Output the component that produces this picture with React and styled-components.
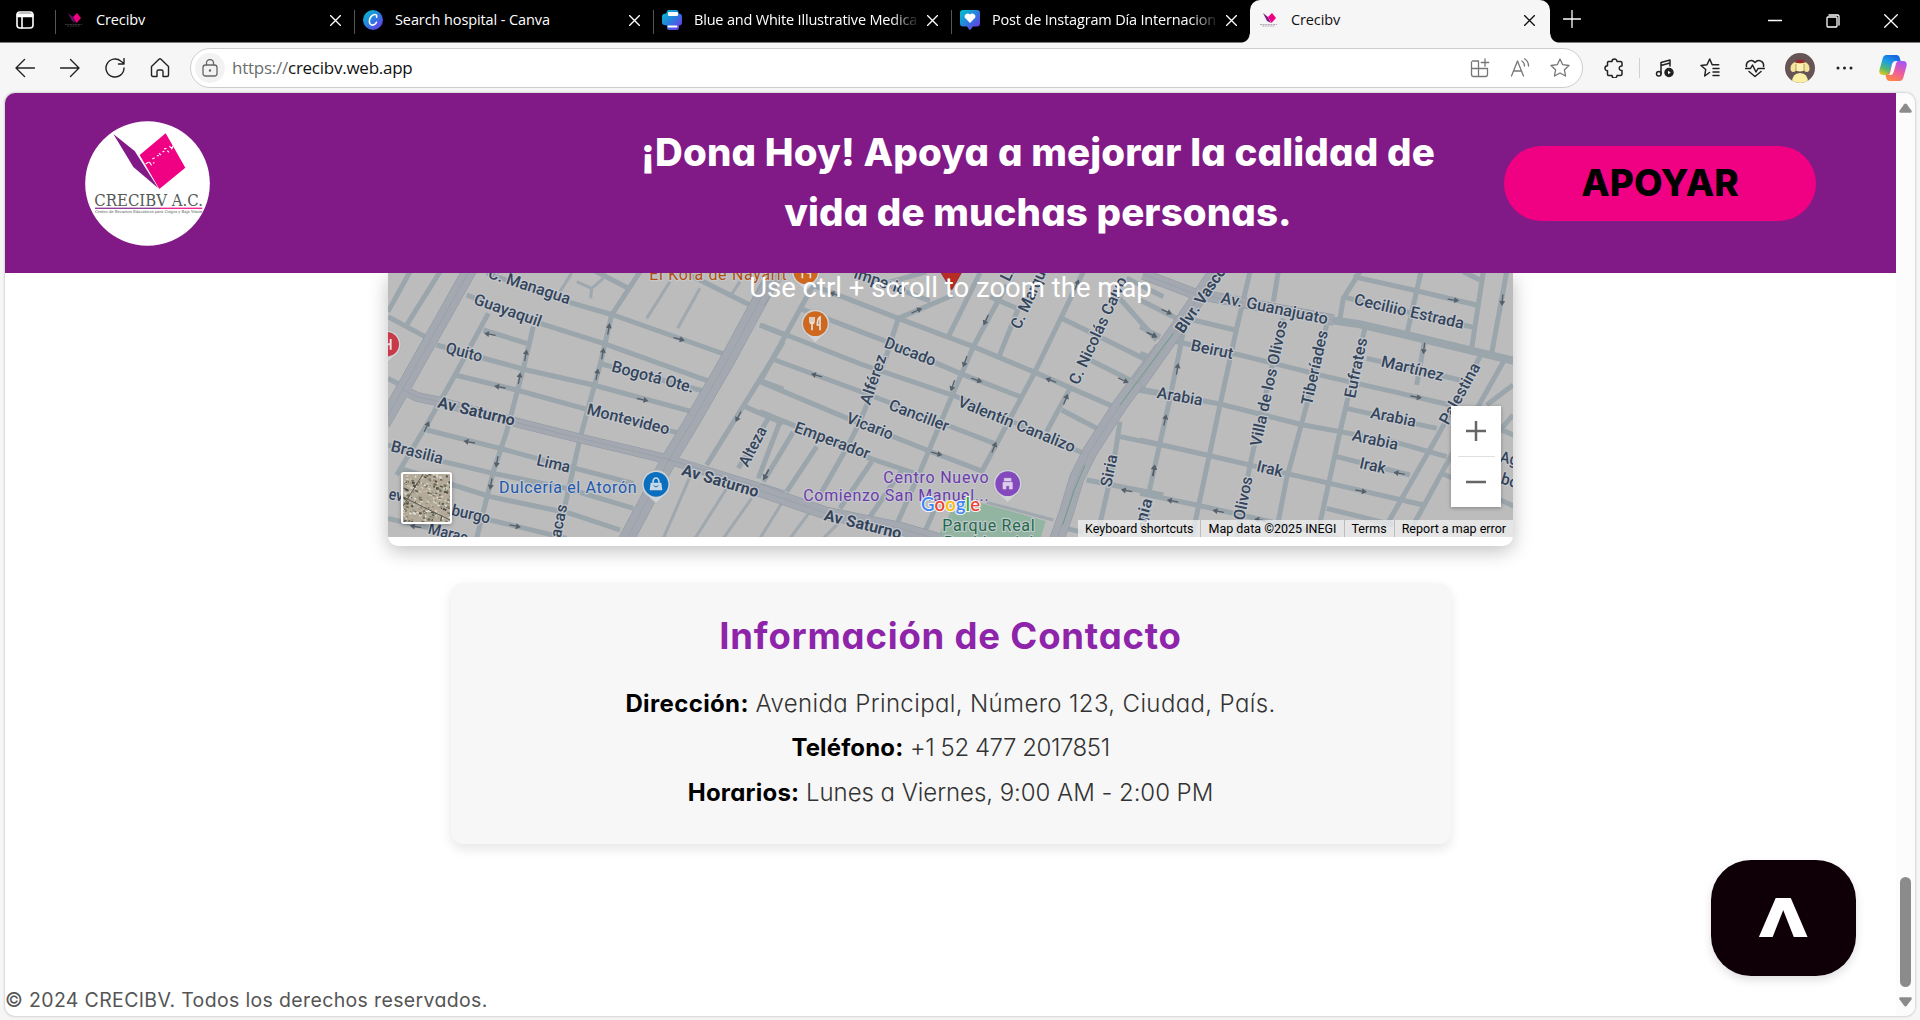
import React from "react";
import styled, { createGlobalStyle, css } from "styled-components";

const Global = createGlobalStyle`
  * { box-sizing: border-box; }
  html, body { margin: 0; padding: 0; }
  body { width: 1920px; height: 1020px; overflow: hidden; background: #f6f6f6; font-family: Inter, "Liberation Sans", sans-serif; }
  svg { display: block; flex: none; }
`;

const brandFont = css`
  font-family: Inter, "Liberation Sans", sans-serif;
  font-feature-settings: "cv11";
`;

const Window = styled.div`
  width: 1920px;
  height: 1020px;
  display: flex;
  flex-direction: column;
  background: #f6f6f6;
  overflow: hidden;
`;

const Spaced = styled.span`
  letter-spacing: ${(p) => p.$ls || 0}px;
`;

/* ---------- tab strip ---------- */

const TabStrip = styled.div`
  height: 43px;
  display: flex;
  background: #000;
  border-bottom: 1px solid #7c7c7c;
  flex: none;
`;

const Workspaces = styled.div`
  width: 55px;
  padding: 11px 0 0 16px;
`;

const Tab = styled.div`
  width: ${(p) => p.$w}px;
  height: 42px;
  display: flex;
  align-items: center;
  padding: 0 13px 2px 9px;
  color: #fff;
  position: relative;
  &::before {
    content: "";
    position: absolute;
    left: 0;
    top: 10px;
    width: 1px;
    height: 24px;
    background: #555;
  }
`;

const ActiveTab = styled(Tab)`
  height: 43px;
  padding: 0 15px 3px 9px;
  background: #f6f6f6;
  color: #111;
  border-radius: 10px 10px 0 0;
  &::before {
    left: -9px;
    top: 34px;
    width: 9px;
    height: 9px;
    background: radial-gradient(circle at 0 0, #000 8px, #f6f6f6 9px);
  }
  &::after {
    content: "";
    position: absolute;
    right: -9px;
    top: 34px;
    width: 9px;
    height: 9px;
    background: radial-gradient(circle at 100% 0, #000 8px, #f6f6f6 9px);
  }
`;

const Favicon = styled.div`
  width: 20px;
  height: 20px;
  margin-right: 12px;
  flex: none;
`;

const TabTitle = styled.div`
  flex: 1;
  min-width: 0;
  overflow: hidden;
  white-space: nowrap;
  font: 400 14.5px/20px "Open Sans", "Noto Sans", sans-serif;
  letter-spacing: ${(p) => p.$ls || 0}px;
  ${(p) => p.$fade && css`mask-image: linear-gradient(90deg, #000 88%, transparent 101%);`}
  margin-right: 9px;
`;

const WindowButtons = styled.div`
  margin-left: auto;
  display: flex;
  align-items: center;
  gap: 44px;
  padding-right: 22px;
`;

const NewTab = styled.div`
  padding: 10px 0 0 13px;
`;

/* ---------- toolbar ---------- */

const Toolbar = styled.div`
  height: 50px;
  display: flex;
  align-items: center;
  padding: 0 13px 0 15px;
  flex: none;
`;

const NavButtons = styled.div`
  display: flex;
  align-items: center;
  width: 175px;
  gap: 25px;
`;

const AddressBar = styled.div`
  width: 1393px;
  height: 40px;
  display: flex;
  align-items: center;
  border: 1px solid #cdcdcd;
  border-radius: 20px;
  background: #fff;
  padding: 0 12px 0 4px;
`;

const SiteInfo = styled.div`
  width: 30px;
  height: 30px;
  border-radius: 50%;
  background: #f2f2f2;
  display: grid;
  place-items: center;
  margin-right: 7px;
`;

const Url = styled.div`
  flex: 1;
  color: #111;
  font: 400 17px/24px "Open Sans", "Noto Sans", sans-serif;
  letter-spacing: -0.25px;
  span { color: #6d6d6d; }
`;

const BarIcons = styled.div`
  display: flex;
  gap: 20px;
`;

const Actions = styled.div`
  margin-left: auto;
  display: flex;
  align-items: center;
`;

const Divider = styled.div`
  width: 1px;
  height: 20px;
  background: #d0d0d0;
  margin: 0 15px;
`;

const Shortcuts = styled.div`
  display: flex;
  gap: 25px;
  margin-right: 20px;
`;

const Account = styled.div`
  display: flex;
  align-items: center;
  gap: 20px;
  margin-right: 24px;
`;

/* ---------- page ---------- */

const Viewport = styled.div`
  width: 1910px;
  height: 923px;
  margin-left: 5px;
  display: flex;
  background: #fff;
  border-radius: 10px;
  overflow: hidden;
  box-shadow: 0 0 2px 1px rgba(0, 0, 0, 0.14);
`;

const Page = styled.div`
  width: 1891px;
  display: flex;
  flex-direction: column;
  position: relative;
`;

const Banner = styled.header`
  height: 180px;
  background: #811a87;
  display: flex;
  align-items: center;
  padding: 1px 80px 0;
  position: relative;
  z-index: 1;
  flex: none;
`;

const Slogan = styled.h1`
  ${brandFont}
  width: 800px;
  margin: 0 66px 3px auto;
  text-align: center;
  color: #fff;
  font-size: 38.5px;
  line-height: 60px;
  font-weight: 800;
  white-space: nowrap;
`;

const SupportButton = styled.button`
  ${brandFont}
  width: 312px;
  height: 75px;
  border: 0;
  border-radius: 38px;
  background: #f00082;
  color: #000;
  font-size: 37px;
  font-weight: 800;
  padding: 0 0 2px;
`;

const MapCard = styled.section`
  width: 1125px;
  height: 273px;
  margin: 0 auto;
  background: #fff;
  border-radius: 0 0 10px 10px;
  box-shadow: 0 5px 19px rgba(0, 0, 0, 0.25);
  overflow: hidden;
  position: relative;
  flex: none;
`;

const MapHint = styled.div`
  position: absolute;
  top: -2px;
  left: 0;
  right: 0;
  text-align: center;
  color: #fff;
  font: 400 27.5px/34px Roboto, sans-serif;
`;

const ZoomControl = styled.div`
  position: absolute;
  left: 1063px;
  top: 133px;
  width: 50px;
  height: 101px;
  background: #fff;
  box-shadow: 0 1px 4px rgba(0, 0, 0, 0.3);
  display: flex;
  flex-direction: column;
  align-items: center;
  justify-content: space-between;
  padding: 15px 6px;
  hr { width: 37px; height: 1px; border: 0; margin: 0; background: #e0e0e0; }
`;

const Thumb = styled.div`
  position: absolute;
  left: 13px;
  top: 199px;
  width: 51px;
  height: 52px;
  border: 2px solid #fff;
  border-radius: 3px;
  overflow: hidden;
  box-shadow: 0 1px 4px rgba(0, 0, 0, 0.3);
`;

const Attribution = styled.div`
  position: absolute;
  right: 0;
  top: 247px;
  height: 17px;
  display: flex;
  gap: 1px;
  color: #000;
  font: 400 12.5px/17px Roboto, sans-serif;
  span { background: rgba(245, 245, 245, 0.72); padding: 0 7px; white-space: nowrap; }
`;

const ContactCard = styled.section`
  ${brandFont}
  width: 1000px;
  height: 261px;
  margin: 37px auto 0;
  padding-top: 30px;
  background: #f7f7f7;
  border-radius: 12px;
  box-shadow: 0 5px 12px rgba(0, 0, 0, 0.1);
  text-align: center;
  flex: none;
`;

const ContactTitle = styled.h2`
  margin: 0 0 23px;
  color: #8e24aa;
  font-size: 36.5px;
  line-height: 46px;
  font-weight: 700;
  letter-spacing: 0.8px;
`;

const ContactLine = styled.p`
  margin: 0;
  height: 44.4px;
  line-height: 44.4px;
  color: #333;
  font-size: 24px;
  font-weight: 300;
  white-space: pre;
`;

const FieldName = styled.strong`
  color: #000;
  font-weight: 700;
  letter-spacing: ${(p) => p.$ls || 0}px;
`;

const Footer = styled.footer`
  ${brandFont}
  margin: auto 0 0 0;
  color: #555;
  font-size: 19.5px;
  line-height: 30px;
  height: 31px;
  letter-spacing: 0.35px;
`;

const TopButton = styled.button`
  position: absolute;
  left: 1706px;
  top: 767px;
  width: 145px;
  height: 116px;
  border: 0;
  padding: 0 0 11px;
  border-radius: 40px;
  background: #0f0007;
  color: #fff;
  font: 700 71px/80px "DejaVu Sans", sans-serif;
  box-shadow: 0 4px 10px rgba(0, 0, 0, 0.13);
  span { display: inline-block; transform: scaleX(1.1); }
`;

const Scrollbar = styled.div`
  width: 19px;
  background: #fcfcfc;
  display: flex;
  flex-direction: column;
  align-items: center;
  padding: 10px 0 9px;
`;

const ScrollThumb = styled.div`
  width: 11px;
  height: 110px;
  margin: auto 0 10px;
  border-radius: 6px;
  background: #8b8b8b;
`;

/* ---------- icons ---------- */

const Line = ({ w = 20, h = 20, sw = 1.3, c = "currentColor", children }) => (
  <svg width={w} height={h} viewBox={`0 0 ${w} ${h}`} fill="none" stroke={c} strokeWidth={sw} strokeLinecap="round" strokeLinejoin="round">
    {children}
  </svg>
);

const Cross = ({ s = 11 }) => (
  <Line w={s} h={s} sw={1.4}><path d={`M.5 .5L${s - 0.5} ${s - 0.5}M${s - 0.5} .5L.5 ${s - 0.5}`} /></Line>
);

const BookFavicon = ({ dim }) => (
  <svg width="20" height="20" viewBox="0 0 20 20">
    <path d="M4 3l5 4 3 6-4-2z" fill={dim ? "#5d1563" : "#811a87"} />
    <path d="M9 7l4-4 4 5-4.500 5z" fill="#f00082" />
    <path d="M1 14.500h17M3 16h13" stroke={dim ? "#38343a" : "#b9a8bb"} strokeWidth="1" strokeDasharray="2 .6" />
  </svg>
);

const Gradient = ({ id }) => (
  <linearGradient id={id} x1="0" y1="0" x2="1" y2="1">
    <stop offset="0" stopColor="#00c4cc" /><stop offset=".5" stopColor="#2a7de0" /><stop offset="1" stopColor="#7d2ae8" />
  </linearGradient>
);

const CanvaIcon = () => (
  <svg width="20" height="20" viewBox="0 0 20 20">
    <defs><Gradient id="gc" /></defs>
    <circle cx="10" cy="10" r="10" fill="url(#gc)" />
    <path d="M13.600 7.200c.5-1.700-.5-3-2.300-2.700-2.800.4-5.100 4-4.900 7.200.1 2.200 1.400 3.600 3.300 3.400 1.600-.2 2.900-1.300 3.800-2.800" fill="none" stroke="#fff" strokeWidth="1.600" strokeLinecap="round" />
  </svg>
);

const PrintIcon = () => (
  <svg width="20" height="20" viewBox="0 0 20 20">
    <defs><Gradient id="gp" /></defs>
    <path d="M5 1.500Q5 0 6.500 0h8Q16 0 16.500 2l.5 1.500q3 .5 3 3v6q0 3-3 3v2.500q0 2-2 2H7Q5 20 5 18v-2.500q-5 0-5-3v-6q0-3 4-3z" fill="url(#gp)" />
    <rect x="6" y="2" width="10" height="4" rx="1" fill="#fff" /><rect x="5.500" y="15.500" width="10" height="2" rx="1" fill="#fff" />
  </svg>
);

const HeartIcon = () => (
  <svg width="20" height="20" viewBox="0 0 20 20">
    <defs><Gradient id="gh" /></defs>
    <path d="M3 0h14q3 0 3 3v10.500q0 3-3 3h-4l-2.500 3.200q-.6.600-1.200 0L7 16.500H3q-3 0-3-3V3q0-3 3-3z" fill="url(#gh)" />
    <path d="M10 13L4.700 7.600a3.100 3.100 0 0 1 5.300-3 3.100 3.100 0 0 1 5.300 3z" fill="#fff" />
  </svg>
);

const LogoText = styled.text`
  font-family: "DejaVu Serif", serif;
  fill: #555a58;
`;

const Logo = () => (
  <svg width="125" height="125" viewBox="0 0 375 375">
    <defs>
      <clipPath id="disc"><circle cx="187.500" cy="187.500" r="187" /></clipPath>
      <linearGradient id="rule"><stop offset=".6" stopColor="#811a87" /><stop offset=".62" stopColor="#f00082" /></linearGradient>
    </defs>
    <circle cx="187.500" cy="187.500" r="187" fill="#fff" />
    <g clipPath="url(#disc)">
      <path d="M85 39l64 51 71 112-75-64z" fill="#811a87" />
      <path d="M242 37l59 103-78 64-59-102z" fill="#f00082" />
      <path d="M183 128l7 -4M194 124l5 8M203 113l5-2M205 126l2-1M217 104l3 0M223 98l4 3M234 92l3-1M239 83l4 0M248 90l3 3M254 76l7 7M260 84l4-9" stroke="#fff" strokeWidth="3.500" strokeLinecap="round" />
      <LogoText x="28" y="254" fontSize="50" textLength="326" lengthAdjust="spacingAndGlyphs">CRECIBV A.C.</LogoText>
      <rect x="30" y="260" width="322" height="3.500" fill="url(#rule)" />
      <LogoText x="30" y="277" fontSize="12" textLength="322" lengthAdjust="spacingAndGlyphs">Centro de Recursos Educativos para Ciegos y Baja Visión</LogoText>
    </g>
  </svg>
);

const Copilot = () => (
  <svg width="28" height="28" viewBox="0 0 28 28">
    <defs>
      <linearGradient id="cb" x1=".6" y1="0" x2=".1" y2="1"><stop offset="0" stopColor="#1769e0" /><stop offset=".35" stopColor="#1b9de8" /><stop offset=".7" stopColor="#58b96a" /><stop offset="1" stopColor="#f2c71c" /></linearGradient>
      <linearGradient id="cp" x1=".7" y1="0" x2=".2" y2="1"><stop offset="0" stopColor="#a855f7" /><stop offset=".5" stopColor="#ee5d9a" /><stop offset="1" stopColor="#ff8a3c" /></linearGradient>
    </defs>
    <path d="M7.500 1h10q2.500 0 3.300 3l1 3.500h-4q-2.500 0-3.300 3l-2.300 8q-.8 2.500-3.200 2.500H4Q-.8 21 .7 15L3.800 4Q4.700 1 7.500 1z" fill="url(#cb)" />
    <path d="M20.500 27h-10Q8 27 7.200 24l-.7-3q3 0 4-3l2.600-8.500q.8-2.500 3.400-2.500H24q4.800 0 3.300 6l-3.100 11q-.9 3-3.700 3z" fill="url(#cp)" />
    <path d="M13.200 9.500q.8-2.500 3.400-2.500h1.900q-1 .8-1.600 3l-2.400 8.500q-.8 2.500-3.200 2.500H9.500q1.200-.8 1.700-2.500z" fill="#fff" />
  </svg>
);

const Avatar = () => (
  <svg width="30" height="30" viewBox="0 0 30 30">
    <defs><clipPath id="av"><circle cx="15" cy="15" r="15" /></clipPath></defs>
    <g clipPath="url(#av)">
      <rect width="30" height="30" fill="#665456" />
      <path d="M5.500 15q.5-5 5-6h9q4.500 1 5 6 .3 4-3 4-2 0-2.500-2h-8q-.5 2-2.500 2-3.300 0-3-4z" fill="#f5e59a" />
      <path d="M7 30q0-10 8-10t8 10z" fill="#fbefa5" />
      <path d="M10 9.500q.5-3 5-3t5 3q-5 1.500-10 0z" fill="#962a2c" />
      <path d="M11 11h8v6.500q-4 2-8 0z" fill="#fdf1b2" />
      <path d="M11 11v6M19 11v6" stroke="#8d7a5c" strokeWidth=".7" />
    </g>
  </svg>
);

/* ---------- map ---------- */

/* Each tile uses its own 3x coordinate space. */
const tiles = [
  {
    x: -8,
    major: [
      ["M272 10L70 370 10 475", 40], ["M1175 40L1040 290 930 480 868 582 738 825", 44],
      ["M70 375L110 395 170 408 420 475 600 520 860 582 1210 690", 26],
    ],
    minor: [
      "M320 24L560 110 700 150 1040 270", "M260 90L490 178 670 235 990 350", "M170 240L330 285 440 315 640 360 935 440",
      "M665 297L970 378", "M225 330L410 375 610 430 900 505", "M310 195L440 235", "M140 495L360 550 470 580 760 655",
      "M24 540L190 590 340 625 560 670 760 730", "M60 610L220 660 330 695 570 745 720 795", "M24 760L150 790", "M220 740L330 765 560 820",
      "M460 185L430 310 380 500 340 620 290 820", "M325 145L225 330 140 480 50 630", "M780 20L695 150 660 300 600 520 560 700 530 820",
      "M90 20L24 140", "M24 155L135 215", "M180 20L80 180", "M24 340L65 362", "M640 15L745 70", "M900 15L1120 125",
      "M1140 180L1210 208", "M1135 345L1210 372", "M1210 230L980 600", "M1095 425L1210 475", "M1165 460L1075 610",
    ],
    thin: ["M590 50L635 70 670 40", "M635 70L632 100", "M575 24L540 80", "M870 50L800 160", "M960 70L893 190", "M1080 50L1050 95", "M945 600L850 820", "M1050 655L945 820", "M1115 700L1030 820"],
    arrows: [[330, 208, 190], [897, 222, 15], [686, 192, -80], [668, 266, -80], [651, 328, -80], [437, 271, -80], [418, 340, -80], [360, 366, 190], [788, 404, 12], [140, 485, -65], [268, 531, 190], [351, 590, 100], [333, 657, 100], [1075, 455, 118], [1158, 630, 118], [405, 783, 12], [107, 785, 190]],
    labels: [["C. Managua", 322, 38, 565, 118], ["Guayaquil", 278, 116, 478, 186], ["Quito", 194, 263, 303, 291], ["Bogotá Ote.", 692, 319, 938, 384], ["Montevideo", 618, 447, 864, 509], ["Av Saturno", 170, 427, 401, 483, 1], ["Brasilia", 30, 558, 185, 597], ["Lima", 467, 600, 567, 623], ["Alteza", 1103, 608, 1162, 495], ["Av Saturno", 902, 629, 1131, 697, 1], ["burgo", 212, 750, 327, 776], ["Marac", 142, 805, 259, 835], ["ev", 24, 702, 66, 710], ["acas", 542, 820, 562, 722]],
  },
  {
    x: 372,
    major: [["M-5 110L55 20", 40], ["M-5 675L200 745 420 790 540 825", 36], ["M1205 250L1080 420 990 560 950 640 920 740 888 830", 42]],
    minor: [
      "M0 180L80 210 310 300 590 395 780 480 970 565", "M45 285L330 390 560 480 715 540", "M0 350L250 455 500 555 670 620",
      "M0 440L110 485 330 580 480 630", "M120 130L380 230 600 325 780 395", "M130 50L415 160 640 245 820 320 1060 425",
      "M280 20L510 108", "M415 160L580 90", "M365 58L500 20", "M160 60L0 350", "M415 160L380 270 300 470 265 540 180 690",
      "M660 24L565 215", "M740 60L640 245 560 430 480 620 405 790", "M775 130L715 280", "M970 20L820 330 740 480 665 620",
      "M905 160L1160 285", "M1070 90L1190 225", "M1100 40L1210 95", "M930 370L860 500", "M905 435L1010 490", "M990 285L1110 345",
      "M60 470L-5 640", "M100 500L10 650", "M170 545L80 680", "M335 590L240 730", "M430 610L330 755", "M530 720L490 810",
      "M1080 470L1060 600 1010 820", "M1080 515L1210 542", "M980 645L1210 690", "M1130 375L1210 388", "M895 785L970 802", "M690 95L770 130",
    ],
    thin: ["M65 715L0 820", "M150 740L90 820", "M240 770L190 820", "M680 712L880 765"],
    arrows: [[225, 88, 200], [470, 137, -25], [678, 165, 115], [615, 290, 110], [578, 362, 110], [650, 345, 20], [170, 331, 195], [530, 566, 15], [702, 547, -68], [873, 346, 200], [917, 403, -68], [1090, 346, 25], [1176, 209, 25], [18, 628, 118], [1100, 677, 190], [1182, 617, -82], [950, 60, -68]],
    labels: [["Imperio", 278, 38, 432, 90], ["Ducado", 370, 246, 520, 304], ["Alférez", 330, 422, 380, 275], ["Canciller", 383, 433, 560, 500], ["Vicario", 256, 472, 392, 525], ["Emperador", 100, 500, 323, 583], ["Valentín Canalizo", 590, 422, 938, 563], ["C. Marqu", 780, 195, 858, 25], ["C. Nicolás Calvo", 955, 362, 1102, 45], ["Li", 748, 52, 765, 18], ["Siria", 1053, 668, 1073, 572], ["Av Saturno", 190, 765, 420, 822, 1], ["ania", 1163, 795, 1178, 706]],
  },
  {
    x: 752,
    major: [["M235 10L140 150 -5 355", 42], ["M10 28L160 85 240 100 580 165", 30]],
    minor: [
      "M330 20L290 190 240 420 155 820", "M415 20L400 110M430 160L390 330 330 600 290 820", "M560 180L500 420 440 640 405 820",
      "M675 190L640 330 600 500 530 820", "M130 200L90 400 25 690", "M100 228L300 270 560 335 760 380 930 420", "M160 165L285 195",
      "M0 372L240 417 490 480 600 500 760 530 920 575", "M0 525L200 570 350 605 570 655 850 720", "M0 685L170 720 370 765 600 820",
      "M620 430L890 490", "M590 575L810 630", "M560 730L760 780", "M680 280L960 345", "M640 35L820 75 1010 120", "M660 20L610 100 600 160",
      "M615 97L1000 187", "M843 20L800 210", "M855 220L830 360", "M1030 20L995 250", "M1100 20L1055 265", "M1020 275L900 500 740 780",
      "M1090 290L1000 450 820 780", "M1119 360L1040 420", "M1119 450L1060 520", "M905 625L1125 725", "M1050 480L1125 512", "M0 105L120 165", "M0 185L60 215", "M970 20L1020 45", "M0 265L25 275",
    ],
    extra: "M570 165L660 178 800 210 1125 288",
    thin: [],
    arrows: [[80, 140, 25], [35, 209, 25], [940, 105, 8], [1087, 105, 95], [852, 250, 97], [828, 396, 10], [112, 312, -80], [75, 465, -78], [41, 616, -78], [98, 708, 190], [235, 739, 190], [360, 765, 190], [663, 678, 10], [778, 625, 190]],
    labels: [["Blvr. Vasco", 130, 208, 260, 18, 1], ["Av. Guanajuato", 240, 113, 560, 178], ["Ceciliio Estrada", 640, 118, 968, 192], ["Beirut", 150, 256, 276, 282], ["Arabia", 49, 398, 185, 422], ["Villa de los Olivos", 362, 547, 442, 170], ["Tiberíades", 515, 423, 564, 200], ["Eufrates", 645, 402, 682, 222], ["Martínez", 721, 304, 907, 348], ["Palestina", 924, 482, 1022, 305], ["Arabia", 689, 458, 825, 486], ["Arabia", 634, 526, 771, 555], ["Irak", 347, 618, 425, 636], ["Irak", 656, 609, 734, 626], ["Olivos", 312, 768, 338, 638], ["nia", 18, 775, 38, 705], ["Ag", 1078, 590, 1130, 602], ["bo", 1080, 655, 1130, 670]],
  },
];

const MapLabel = styled.text`
  font-family: Roboto, sans-serif;
  font-size: 48px;
  font-weight: ${(p) => (p.$bold ? 700 : p.$c ? 400 : 500)};
  fill: ${(p) => p.$c || "#34445a"};
  stroke: #c4c8cd;
  stroke-width: 7px;
  stroke-linejoin: round;
  paint-order: stroke;
`;

const StreetLabel = ({ d: [text, x1, y1, x2, y2, bold] }) => {
  const angle = (Math.atan2(y2 - y1, x2 - x1) * 180) / Math.PI;
  return (
    <MapLabel $bold={bold} transform={`translate(${x1} ${y1}) rotate(${angle})`} textLength={Math.hypot(x2 - x1, y2 - y1)} lengthAdjust="spacingAndGlyphs">
      {text}
    </MapLabel>
  );
};

const Pin = ({ x, y, c, children }) => (
  <g transform={`translate(${x} ${y})`}>
    <path d="M0 57L-22 37A43 43 0 1 1 22 37z" fill="#d0d3d6" stroke="#a9adb1" strokeWidth="2" />
    <circle r="37" fill={c} />
    {children}
  </g>
);

const Fork = () => (
  <path d="M-16-20v14q0 5 6 6v20M-4-20v14q0 5-6 6M-10-20v18M14 20V-20q-8 4-8 24h8" fill="none" stroke="#e5e0da" strokeWidth="5" />
);

const GoogleMark = styled.text`
  font: 600 18.5px Lato, sans-serif;
  stroke: #f4f4f4;
  stroke-width: 2.2px;
  paint-order: stroke;
`;

const MapArt = () => (
  <svg width="1125" height="264" viewBox="0 0 1125 264">
    <rect width="1125" height="264" fill="#bcbcbc" />
    <g transform="translate(372 -8) scale(.33333)">
      <path d="M590 708l70 5 197 55-18 62H525z" fill="#92b5a1" />
    </g>
    {tiles.map((t) => (
      <g key={t.x} transform={`translate(${t.x} -8) scale(.33333)`} fill="none" strokeLinejoin="round">
        {t.thin.map((d) => <path key={d} d={d} stroke="#9fa8af" strokeWidth="9" />)}
        {t.minor.map((d) => <path key={d} d={d} stroke="#9ba5ac" strokeWidth="15" />)}
        {t.extra && <path d={t.extra} stroke="#9ba5ac" strokeWidth="24" />}
      </g>
    ))}
    {tiles.map((t) => (
      <g key={t.x} transform={`translate(${t.x} -8) scale(.33333)`} fill="none" strokeLinejoin="round">
        {t.major.map(([d, w]) => <path key={d} d={d} stroke="#8f98a2" strokeWidth={w + 3} />)}
        {t.major.map(([d, w]) => <path key={d + w} d={d} stroke="#a4a9b1" strokeWidth={w} />)}
        {t.major.map(([d]) => <path key={d + "c"} d={d} stroke="#969da7" strokeWidth="2" />)}
      </g>
    ))}
    <g transform="translate(372 -8) scale(.33333)" fill="none" stroke="#6b9c88" strokeWidth="3">
      <path d="M1240 205L1200 258 1080 420M975 600L945 670 908 780" />
    </g>
    {tiles.map((t) => (
      <g key={t.x} transform={`translate(${t.x} -8) scale(.33333)`}>
        {t.arrows.map(([x, y, r]) => (
          <path key={`${x}-${y}`} transform={`translate(${x} ${y}) rotate(${r})`} d="M-17-2H3V-9L18 0 3 9V2H-17z" fill="#56606b" />
        ))}
        {t.labels.map((d) => <StreetLabel key={d[0] + d[1] + d[2]} d={d} />)}
      </g>
    ))}
    <g transform="translate(-8 -8) scale(.33333)">
      <Pin x="20" y="238" c="#c83a4a"><path d="M-8-16v32M12-16v32M-8 0h20" stroke="#e8dfe0" strokeWidth="6" /></Pin>
      <Pin x="828" y="658" c="#0b6fc0">
        <path d="M-16-5h32l3 23h-38z" fill="#c9d8e6" /><path d="M-9-5q0-14 9-14t9 14" fill="none" stroke="#c9d8e6" strokeWidth="5" /><path d="M-7 4q7 8 14 0" fill="none" stroke="#0b6fc0" strokeWidth="3" />
      </Pin>
      <MapLabel $c="#2258ac" x="357" y="683" textLength="413">Dulcería el Atorón</MapLabel>
      <MapLabel $c="#b1500f" x="808" y="46" textLength="412">El Kora de Nayarit</MapLabel>
    </g>
    <g transform="translate(372 -8) scale(.33333)">
      <Pin x="137" y="20" c="#cf681f"><Fork /></Pin>
      <Pin x="166" y="176" c="#cf681f"><Fork /></Pin>
      <path d="M535 10L575 75 612 10z" fill="#b72c25" stroke="#8d1d1b" strokeWidth="2" />
      <Pin x="743" y="656" c="#8349bd">
        <path d="M-14 16V-4h28v20H5V6H-5v10zM-10-7v-9h20v9" fill="#dccfe8" stroke="#dccfe8" strokeWidth="2" />
      </Pin>
      <MapLabel $c="#6d3bab" x="370" y="655" textLength="316">Centro Nuevo</MapLabel>
      <MapLabel $c="#6d3bab" x="130" y="708" textLength="556">Comienzo San Manuel...</MapLabel>
      <MapLabel $c="#1d6b49" x="547" y="797" textLength="277">Parque Real</MapLabel>
      <MapLabel $c="#1d6b49" x="552" y="850" textLength="268">Residencial</MapLabel>
    </g>
    <GoogleMark x="533" y="237.5" textLength="59">
      <tspan fill="#4285f4">G</tspan><tspan fill="#ea4335">o</tspan><tspan fill="#fbbc04">o</tspan><tspan fill="#4285f4">g</tspan><tspan fill="#34a853">l</tspan><tspan fill="#ea4335">e</tspan>
    </GoogleMark>
  </svg>
);

const satelliteColors = ["#d2cfc2", "#9a9686", "#4c4d42", "#bda999", "#b5ab99", "#e2e0d6", "#6b6a5c"];

const satellite = Array.from({ length: 620 }, (_, i) => {
  const r = (n) => {
    const v = Math.sin(i * 12.9898 + n * 78.233) * 43758.5453;
    return v - Math.floor(v);
  };
  return { x: r(1) * 62 - 7, y: r(2) * 62 - 7, w: 1 + r(3) * 2.5, h: 0.7 + r(4) * 1.6, c: satelliteColors[Math.floor(r(5) * 7)] };
});

const Satellite = () => (
  <svg width="47" height="48" viewBox="0 0 47 48">
    <rect width="47" height="48" fill="#b3aa99" />
    <g transform="rotate(18 24 24)">
      {satellite.map((s, i) => <rect key={i} x={s.x} y={s.y} width={s.w} height={s.h} fill={s.c} />)}
    </g>
    <path d="M20 0L0 32M2 24l45 22" stroke="#5c5b50" strokeWidth="1" />
  </svg>
);

export default function App() {
  return (
    <Window>
      <Global />
      <TabStrip>
        <Workspaces>
          <Line w={19} h={19} sw={1.6} c="#fff"><rect x="1" y="1" width="16" height="16" rx="3" /><path d="M1.500 3h15v2.500h-15z" fill="#fff" /><path d="M6 5v12" /></Line>
        </Workspaces>
        <Tab $w={299}><Favicon><BookFavicon dim /></Favicon><TabTitle $ls={-0.13}>Crecibv</TabTitle><Cross /></Tab>
        <Tab $w={299}><Favicon><CanvaIcon /></Favicon><TabTitle $ls={-0.1}>Search hospital - Canva</TabTitle><Cross /></Tab>
        <Tab $w={298}><Favicon><PrintIcon /></Favicon><TabTitle $fade $ls={-0.19}>Blue and White Illustrative Medica</TabTitle><Cross /></Tab>
        <Tab $w={299}><Favicon><HeartIcon /></Favicon><TabTitle $fade $ls={-0.17}>Post de Instagram Día Internacion</TabTitle><Cross /></Tab>
        <ActiveTab $w={300}><Favicon><BookFavicon /></Favicon><TabTitle $ls={-0.13}>Crecibv</TabTitle><Cross /></ActiveTab>
        <NewTab><Line w={18} h={18} c="#fff"><path d="M9 .5v17M.5 9h17" /></Line></NewTab>
        <WindowButtons>
          <Line w={14} h={14} c="#fff"><path d="M.5 6.500h13" /></Line>
          <Line w={14} h={14} c="#fff"><rect x="1" y="3" width="10" height="10" rx="1" /><path d="M3 1h8.500q1.500 0 1.500 1.500V11" /></Line>
          <Line w={14} h={14} c="#fff"><path d="M.7 .7l12.600 12.600M13.300 .7L.7 13.300" /></Line>
        </WindowButtons>
      </TabStrip>

      <Toolbar>
        <NavButtons>
          <Line sw={1.4} c="#222"><path d="M19.500 10H1M9.500 1.500L1 10l8.500 8.500" /></Line>
          <Line sw={1.4} c="#222"><path d="M.5 10H19M10.500 1.500L19 10l-8.500 8.500" /></Line>
          <Line sw={1.4} c="#222"><path d="M19 10a9 9 0 1 1-3-6.700l3 2.200M19 .5v5.500h-5.500" /></Line>
          <Line sw={1.4} c="#222"><path d="M1.500 8.500L9 1.300q1-.9 2 0l7.500 7.200v8.500q0 1.500-1.500 1.500h-4v-5q0-1.500-1.500-1.500h-3Q7 12 7 13.500v5H3Q1.500 18.500 1.500 17z" /></Line>
        </NavButtons>
        <AddressBar>
          <SiteInfo><Line w={16} h={18} c="#666"><rect x="1" y="6" width="14" height="11" rx="2.500" /><path d="M4.500 6V4a3.500 3.500 0 0 1 7 0v2" /><circle cx="8" cy="11.500" r=".6" fill="#666" /></Line></SiteInfo>
          <Url><span>https://</span>crecibv.web.app</Url>
          <BarIcons>
            <Line c="#777"><path d="M2.500 3h6v15.500h-5q-2 0-2-2V4M1.500 10.500h16v6q0 2-2 2h-7M15 .8v7.500M11.200 4.500h7.500" /></Line>
            <Line c="#777"><path d="M1.500 18L7.500 3l6 15M3.500 13h8M12 3q2.500 1.700 2.500 5M14.500 .7Q18.500 3 18.500 8" /></Line>
            <Line c="#777"><path d="M10 1l2.700 5.700 6.300.8-4.600 4.300 1.200 6.200-5.600-3-5.600 3 1.200-6.200L1 7.500l6.300-.8z" /></Line>
          </BarIcons>
        </AddressBar>
        <Actions>
          <Line sw={1.5} c="#222"><path d="M4.500 3.500H8a2.500 2.500 0 0 1 5 0h3.500q1.500 0 1.500 1.500v3a2.300 2.300 0 1 0 0 4.500V16q0 1.500-1.500 1.500H13a2.500 2.500 0 0 1-5 0H4.500Q3.500 17.500 3.500 16v-3.200a2.500 2.500 0 0 1 0-5V5q0-1.500 1-1.500z" /></Line>
          <Divider />
          <Shortcuts>
            <Line sw={1.5} c="#222"><path d="M6 15.500V4.500L15 2v6M6 7.500l9-2.500" /><circle cx="3.800" cy="15.800" r="2.300" /><circle cx="14" cy="14.500" r="4" fill="#222" /><path d="M13 12.700v3.600l2.700-1.800z" fill="#fff" stroke="none" /></Line>
            <Line sw={1.5} c="#222"><path d="M9.500 14.500L4.700 18l1-6.500L1 7.500l6-.8L9.700 1l2.500 5.700h6.500M13 10.500H19M13 14H19M13 17.500H19" /></Line>
            <Line sw={1.5} c="#222"><path d="M1.500 8.500C.5 3.500 6.500.5 10 4.500 13.500.5 19.500 3.500 18.500 8.500M.5 10.500h5l2-3.500 3.500 7 2-3.500h6.500M4 13.500l6 5 6-5" /></Line>
          </Shortcuts>
          <Account>
            <Avatar />
            <Line c="#222"><g fill="#222" stroke="none"><circle cx="3" cy="10" r="1.500" /><circle cx="9.500" cy="10" r="1.500" /><circle cx="16" cy="10" r="1.500" /></g></Line>
          </Account>
          <Copilot />
        </Actions>
      </Toolbar>

      <Viewport>
        <Page>
          <Banner>
            <Logo />
            <Slogan>
              <Spaced $ls={0.15}>¡Dona Hoy! Apoya a mejorar la calidad de</Spaced><br />
              <Spaced $ls={0.1}>vida de muchas personas.</Spaced>
            </Slogan>
            <SupportButton>APOYAR</SupportButton>
          </Banner>
          <MapCard>
            <MapArt />
            <MapHint>Use ctrl + scroll to zoom the map</MapHint>
            <Thumb><Satellite /></Thumb>
            <ZoomControl>
              <Line w={22} h={20} sw={2.5} c="#666"><path d="M11 0v20M1 10h20" strokeLinecap="butt" /></Line>
              <hr />
              <Line w={22} h={20} sw={2.5} c="#666"><path d="M1 10h20" strokeLinecap="butt" /></Line>
            </ZoomControl>
            <Attribution><span>Keyboard shortcuts</span><span>Map data ©2025 INEGI</span><span>Terms</span><span>Report a map error</span></Attribution>
          </MapCard>
          <ContactCard>
            <ContactTitle>Información de Contacto</ContactTitle>
            <ContactLine><FieldName $ls={0.37}>Dirección:</FieldName> <Spaced $ls={0.37}>Avenida Principal, Número 123, Ciudad, País.</Spaced></ContactLine>
            <ContactLine><FieldName $ls={0.14}>Teléfono:</FieldName> <Spaced $ls={-0.45}>+1 52 477 2017851</Spaced></ContactLine>
            <ContactLine><FieldName $ls={0.21}>Horarios:</FieldName> <Spaced $ls={-0.05}>Lunes a Viernes, 9:00 AM - 2:00 PM</Spaced></ContactLine>
          </ContactCard>
          <Footer>© 2024 CRECIBV. Todos los derechos reservados.</Footer>
          <TopButton><span>ʌ</span></TopButton>
        </Page>
        <Scrollbar>
          <svg width="13" height="10" viewBox="0 0 13 10"><path d="M5.200 1.200q1.300-1.500 2.600 0l4.800 6.500q.6 1.800-1 2H1.400q-1.600-.2-1-2z" fill="#8b8b8b" /></svg>
          <ScrollThumb />
          <svg width="13" height="10" viewBox="0 0 13 10"><path d="M5.200 8.800q1.300 1.500 2.600 0l4.800-6.500q.6-1.800-1-2H1.400q-1.600.2-1 2z" fill="#8b8b8b" /></svg>
        </Scrollbar>
      </Viewport>
    </Window>
  );
}
